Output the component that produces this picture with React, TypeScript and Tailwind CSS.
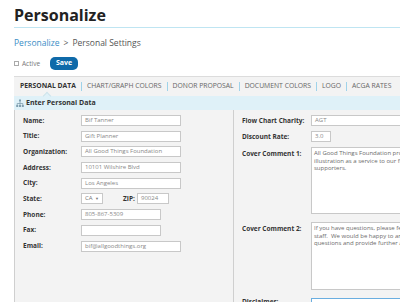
import React from "react";

const font = { fontFamily: '"Open Sans", "Liberation Sans", sans-serif' };

type FieldProps = { label: string; children?: React.ReactNode };

const Row = ({ label, children }: FieldProps) => (
  <div className="flex h-[11px] items-center">
    <div className="w-[58px] shrink-0 text-[6.5px] font-bold text-[#333]">{label}</div>
    {children}
  </div>
);

const Input = ({ value, w }: { value?: string; w: string }) => (
  <div
    className={`${w} flex h-[11px] items-center border border-[#c8c8c8] bg-white px-[3px] text-[6px] text-[#888]`}
  >
    {value}
  </div>
);

const tabs = ["CHART/GRAPH COLORS", "DONOR PROPOSAL", "DOCUMENT COLORS", "LOGO", "ACGA RATES"];

const cover1 = [
  "All Good Things Foundation provides this",
  "illustration as a service to our friends and",
  "supporters.",
];
const cover2 = [
  "If you have questions, please feel free to contact our",
  "staff.  We would be happy to answer your",
  "questions and provide further assistance.",
];

export default function App() {
  return (
    <div className="h-[302px] w-[400px] overflow-hidden bg-white" style={font}>
      <div className="pl-[14px]">
        <div className="flex h-[28px] items-end border-b border-[#bfe5f2] pb-[4px]">
          <h1 className="text-[16px] font-bold leading-none text-[#222]">Personalize</h1>
        </div>
        <div className="mt-[10px] flex h-[10px] items-center text-[8.5px] text-[#555]">
          <span className="text-[#3b8ec6]">Personalize</span>
          <span className="mx-[4px]">&gt;</span>
          <span>Personal Settings</span>
        </div>
        <div className="mt-[9px] flex h-[13px] items-center">
          <div className="h-[5px] w-[5px] border border-[#aaa] bg-white" />
          <span className="ml-[3px] text-[6.5px] text-[#777]">Active</span>
          <button className="ml-[10px] h-[13px] w-[28px] rounded-[5px] bg-[#0f6aa9] text-[7px] font-bold text-white">
            Save
          </button>
        </div>

        <div className="mt-[6px] flex h-[20px] items-center border-t border-[#dcdcdc] bg-[#f3f3f3] pl-[6px] text-[6.8px] text-[#666]">
          <span className="font-bold text-[#333]">PERSONAL DATA</span>
          {tabs.map((t) => (
            <React.Fragment key={t}>
              <span className="mx-[5px] h-[9px] w-px bg-[#9fd3ea]" />
              <span>{t}</span>
            </React.Fragment>
          ))}
        </div>

        <div className="relative flex h-[14px] items-center bg-[#dff1f8] pl-[2px] text-[7px] font-bold text-[#333]">
          <div className="absolute top-[-3px] left-[30px] h-[6px] w-[6px] rotate-45 border-t border-l border-[#cfe3ea] bg-[#dff1f8]" />
          <svg width="8" height="8" viewBox="0 0 8 8" className="mr-[2px]">
            <rect x="3" y="0.5" width="2" height="2" fill="#7f9fb0" />
            <path d="M4 2.5v2M1.2 4.5h5.6M1.2 4.5v1.5M6.8 4.5v1.5M4 4.5v1.5" stroke="#7f9fb0" strokeWidth="0.8" fill="none" />
            <rect x="0.2" y="6" width="2" height="2" fill="#7f9fb0" />
            <rect x="3" y="6" width="2" height="2" fill="#7f9fb0" />
            <rect x="5.8" y="6" width="2" height="2" fill="#7f9fb0" />
          </svg>
          Enter Personal Data
        </div>

        <div className="flex h-[200px] border-l border-[#cfcfcf] bg-[#f3f3f3]">
          <div className="flex w-[219px] shrink-0 flex-col gap-[4.7px] border-r border-[#cfcfcf] pt-[5px] pl-[8px]">
            <Row label="Name:"><Input w="w-[100px]" value="Bif Tanner" /></Row>
            <Row label="Title:"><Input w="w-[100px]" value="Gift Planner" /></Row>
            <Row label="Organization:"><Input w="w-[100px]" value="All Good Things Foundation" /></Row>
            <Row label="Address:"><Input w="w-[100px]" value="10101 Wilshire Blvd" /></Row>
            <Row label="City:"><Input w="w-[100px]" value="Los Angeles" /></Row>
            <Row label="State:">
              <div className="flex h-[11px] w-[22px] items-center justify-between border border-[#c8c8c8] bg-white px-[3px] text-[6px] text-[#777]">
                <span>CA</span>
                <span className="text-[4px]">▼</span>
              </div>
              <span className="ml-[20px] w-[14px] text-[6.5px] font-bold text-[#333]">ZIP:</span>
              <Input w="w-[32px]" value="90024" />
            </Row>
            <Row label="Phone:"><Input w="w-[80px]" value="805-867-5309" /></Row>
            <Row label="Fax:"><Input w="w-[80px]" /></Row>
            <Row label="Email:"><Input w="w-[100px]" value="bif@allgoodthings.org" /></Row>
          </div>

          <div className="flex w-[240px] shrink-0 flex-col pt-[5px] pl-[8px]">
            <div className="flex h-[11px] items-center">
              <div className="w-[69px] shrink-0 text-[6.5px] font-bold text-[#333]">Flow Chart Charity:</div>
              <Input w="w-[160px]" value="AGT" />
            </div>
            <div className="mt-[5px] flex h-[11px] items-center">
              <div className="w-[69px] shrink-0 text-[6.5px] font-bold text-[#333]">Discount Rate:</div>
              <Input w="w-[20px]" value="3.0" />
            </div>
            <div className="mt-[5px] flex">
              <div className="w-[69px] shrink-0 pt-[2px] text-[6.5px] font-bold text-[#333]">Cover Comment 1:</div>
              <div className="h-[67px] w-[160px] shrink-0 border border-[#c8c8c8] bg-white px-[2px] pt-[2px] text-[6px] leading-[7.5px] whitespace-nowrap text-[#6b6b6b]">
                {cover1.map((l) => (
                  <div key={l}>{l}</div>
                ))}
              </div>
            </div>
            <div className="mt-[8px] flex">
              <div className="w-[69px] shrink-0 pt-[2px] text-[6.5px] font-bold text-[#333]">Cover Comment 2:</div>
              <div className="h-[68px] w-[160px] shrink-0 border border-[#c8c8c8] bg-white px-[2px] pt-[2px] text-[6px] leading-[7.5px] whitespace-pre text-[#6b6b6b]">
                {cover2.map((l) => (
                  <div key={l}>{l}</div>
                ))}
              </div>
            </div>
            <div className="mt-[8px] flex">
              <div className="w-[69px] shrink-0 pt-[1px] text-[6.5px] leading-none font-bold text-[#333]">Disclaimer:</div>
              <div className="h-[11px] w-[160px] shrink-0 border border-[#6aaee0] bg-white" />
            </div>
          </div>
        </div>
      </div>
    </div>
  );
}
